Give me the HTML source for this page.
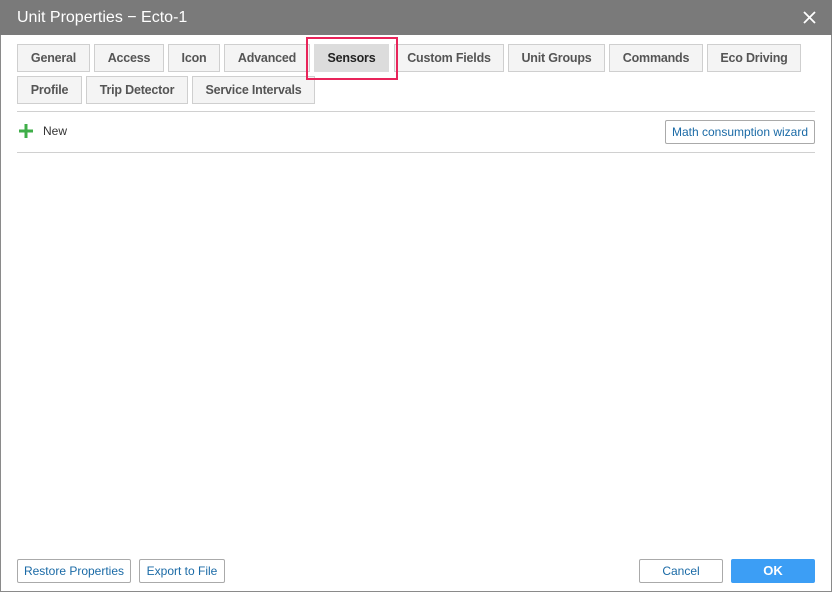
<!DOCTYPE html>
<html><head><style>
*{box-sizing:border-box;margin:0;padding:0}
body{width:832px;height:592px;background:#fff;font-family:"Liberation Sans",Arial,sans-serif;position:relative;overflow:hidden}
.frame{position:absolute;left:0;top:0;width:832px;height:592px;border:1px solid #8a8a8a}
.title{position:absolute;left:0;top:0;width:832px;height:35px;background:#7a7a7a;color:#fff;font-size:16px;line-height:35px;padding-left:17px}
.x{position:absolute;right:16px;top:11px}
.tab{position:absolute;height:28px;border:1px solid #cfcfcf;background:#f4f4f4;color:#555;font-size:12.5px;font-weight:bold;text-align:center;line-height:26px;letter-spacing:-0.2px}
.act{background:#dcdcdc;color:#222;border-color:#dcdcdc}
.red{position:absolute;left:306px;top:37px;width:92px;height:43px;border:2px solid #e8245a}
.hr{position:absolute;left:17px;width:798px;height:1px;background:#d0d0d0}
.btn{position:absolute;height:24px;border:1px solid #aaa;background:#fff;color:#1a6aa6;font-size:12px;text-align:center;line-height:22px;border-radius:2px}
</style></head><body>
<div class="frame"></div>
<div class="title">Unit Properties − Ecto-1<svg class="x" width="13" height="13"><path d="M1 1L12 12M12 1L1 12" stroke="#fff" stroke-width="1.8"/></svg></div>
<div class="tab" style="left:17px;top:44px;width:73px">General</div>
<div class="tab" style="left:94px;top:44px;width:70px">Access</div>
<div class="tab" style="left:168px;top:44px;width:52px">Icon</div>
<div class="tab" style="left:224px;top:44px;width:86px">Advanced</div>
<div class="tab act" style="left:314px;top:44px;width:75px">Sensors</div>
<div class="tab" style="left:394px;top:44px;width:110px">Custom Fields</div>
<div class="tab" style="left:508px;top:44px;width:97px">Unit Groups</div>
<div class="tab" style="left:609px;top:44px;width:94px">Commands</div>
<div class="tab" style="left:707px;top:44px;width:94px">Eco Driving</div>
<div class="tab" style="left:17px;top:76px;width:65px">Profile</div>
<div class="tab" style="left:86px;top:76px;width:102px">Trip Detector</div>
<div class="tab" style="left:192px;top:76px;width:123px">Service Intervals</div>
<div class="red"></div>
<div class="hr" style="top:111px"></div>
<svg style="position:absolute;left:19px;top:124px" width="14" height="14"><rect x="5.5" y="0" width="3" height="14" fill="#3fae49"/><rect x="0" y="5.5" width="14" height="3" fill="#3fae49"/></svg>
<div style="position:absolute;left:43px;top:124px;font-size:12px;color:#333">New</div>
<div class="btn" style="left:665px;top:120px;width:150px">Math consumption wizard</div>
<div class="hr" style="top:152px"></div>
<div class="btn" style="left:17px;top:559px;width:114px">Restore Properties</div>
<div class="btn" style="left:139px;top:559px;width:86px">Export to File</div>
<div class="btn" style="left:639px;top:559px;width:84px">Cancel</div>
<div class="btn" style="left:731px;top:559px;width:84px;background:#3c9ef5;border-color:#3c9ef5;color:#fff;font-weight:bold;font-size:13px">OK</div>
</body></html>
